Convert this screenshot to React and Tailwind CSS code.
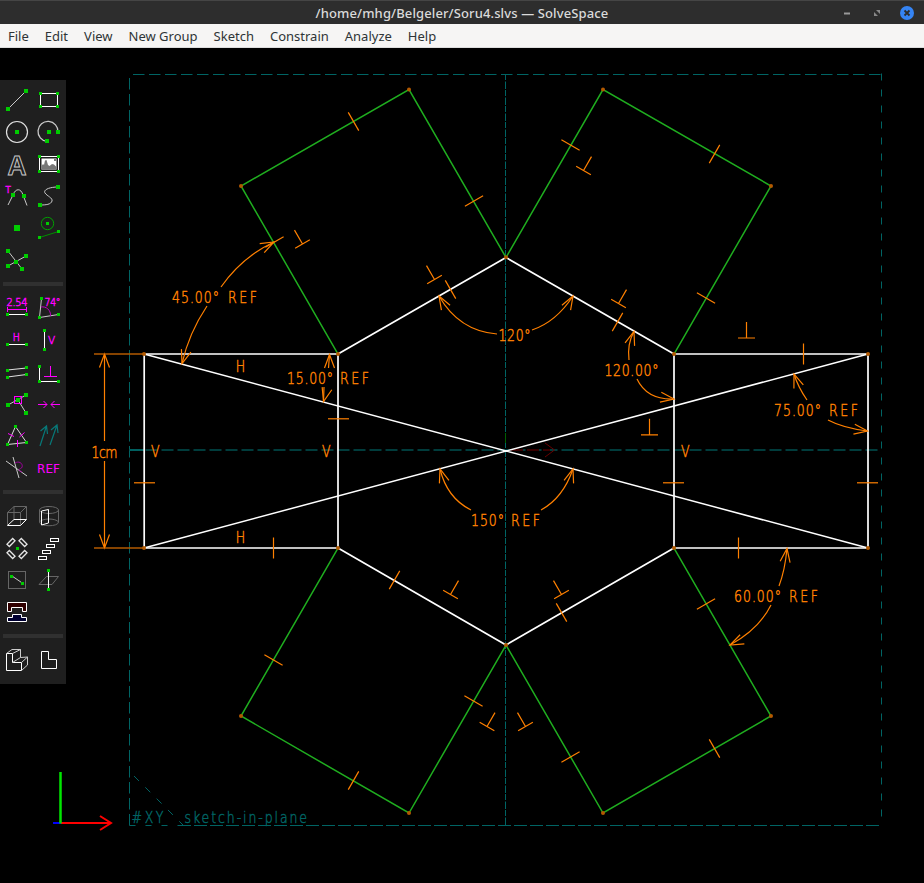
const ORANGE = "#ff8000";
const GREEN = "#1fad1f";
const TEAL = "#006464";

const menus = ["File", "Edit", "View", "New Group", "Sketch", "Constrain", "Analyze", "Help"];

function Sq({ x, y, s = 4 }) {
  return <rect x={x - s / 2} y={y - s / 2} width={s} height={s} fill="#00cc00" stroke="none" />;
}

const L = "#c9c9c9";
const M = "#ff00ff";
const D = "#666666";

function Label({ x, y, w, sx = 0.76, size = 16.5, fill = ORANGE, children }) {
  return (
    <text
      transform={`translate(${x} ${y}) scale(${sx} 1)`}
      textLength={w ? w / sx : undefined}
      lengthAdjust="spacing"
      fontFamily='"DejaVu Sans", sans-serif'
      fontWeight="200"
      fontSize={size}
      fill={fill}
      stroke={fill}
      strokeWidth="0.5"
    >
      {children}
    </text>
  );
}

/* Each icon is drawn in a 32x32 cell; origin is the cell's top left corner. */
const icons = {
  line: <><path d="M8 25L26 7" stroke={L} /><Sq x={8} y={25} /><Sq x={26} y={7} /></>,
  rect: <><rect x="8.5" y="9.5" width="17" height="13" stroke="#fff" /><Sq x={8.5} y={9.5} s={3} /><Sq x={25.5} y={9.5} s={3} /><Sq x={8.5} y={22.5} s={3} /><Sq x={25.5} y={22.5} s={3} /></>,
  circle: <><circle cx="17" cy="16" r="10.5" stroke="#e0e0e0" strokeWidth="1.2" /><Sq x={17} y={16} /></>,
  arc: <><path d="M15 25.4A10 10 0 1 1 26 16" stroke={L} strokeWidth="1.3" /><Sq x={17} y={16} /><Sq x={26} y={16} /><Sq x={15} y={25} /></>,
  text: <text x="7.5" y="26.5" textLength="19" lengthAdjust="spacingAndGlyphs" fontFamily='"Liberation Sans", sans-serif' fontWeight="700" fontSize="28" fill="none" stroke={L} strokeWidth="1">A</text>,
  image: <>
    <rect x="7.5" y="8.5" width="19" height="15" stroke="#fff" />
    <rect x="9.500" y="10.500" width="15" height="11" fill="#fff" stroke="none" />
    <path d="M9.500 21V18L11 16L12 17L13 12.500L14.500 12L16 17L17.500 18L20 16L22 16.500L24.500 19V21.500H9.500Z" fill="#777" stroke="none" />
    <rect x="22" y="11" width="2" height="2" fill="#777" stroke="none" />
    <Sq x={7.5} y={8.5} s={3} /><Sq x={26.5} y={8.5} s={3} /><Sq x={7.5} y={23.5} s={3} /><Sq x={26.5} y={23.5} s={3} />
  </>,
  tangent: <>
    <path d="M8 25L13 15C15.500 8 21 8 23 15L27 25.500" stroke={L} />
    <text x="5.500" y="13" fontFamily='"DejaVu Sans", sans-serif' fontSize="8.500" fill={M} stroke={M} strokeWidth="0.3">T</text>
    <Sq x={13} y={15} /><Sq x={24} y={16} />
  </>,
  spline: <><path d="M26 7C17 7 11 10 13 13C15 16 21 18 20 21C19 24.500 14 25 8 25" stroke={L} /><Sq x={26} y={7} /><Sq x={8} y={25} /></>,
  point: <Sq x={17} y={16} s={6} />,
  construction: <><circle cx="15.500" cy="11.500" r="6.200" stroke="#00a000" /><Sq x={15.5} y={11.5} s={3} /><path d="M7.500 25.500L26.500 19.500" stroke="#009000" /><Sq x={7.5} y={25.5} s={3} /><Sq x={26.5} y={19.5} s={3} /></>,
  split: <><path d="M8 7L22 25M8 22L26 12" stroke={L} /><Sq x={8} y={7} /><Sq x={26} y={12} /><Sq x={8} y={22} /><Sq x={22} y={25} /><Sq x={16} y={18} /></>,
  distance: <>
    <Label x={6.5} y={13.5} w={21} sx={0.9} size={11} fill={M}>2.54</Label>
    <path d="M7.500 15V20M26.500 15V20M7.500 17.500H26.500" stroke={M} />
    <path d="M7 22.500H27" stroke="#fff" /><Sq x={7.5} y={22.5} s={3} /><Sq x={26.5} y={22.5} s={3} />
  </>,
  angle: <>
    <path d="M9.500 6.500L7.500 25.500L26.500 22.500" stroke={L} />
    <path d="M9 15C14 14 19 18 18.500 24" stroke="#c000c0" />
    <Label x={12.5} y={14} w={16} sx={0.85} size={11} fill={M}>74°</Label>
    <Sq x={9.5} y={6.5} s={3} /><Sq x={7.5} y={25.5} s={3} /><Sq x={26.5} y={22.5} s={3} />
  </>,
  horizontal: <><Label x={12.8} y={17} sx={0.9} size={10.5} fill={M}>H</Label><path d="M9 20.500H25" stroke={M} /><path d="M7 20.500H27" stroke="#fff" /><Sq x={7.5} y={20.5} s={3} /><Sq x={26.5} y={20.5} s={3} /></>,
  vertical: <><path d="M12.500 7V26" stroke="#fff" /><Label x={16} y={20} sx={0.95} size={11} fill={M}>V</Label><Sq x={12.5} y={6.5} s={3} /><Sq x={12.5} y={25.5} s={3} /></>,
  parallel: <><path d="M7.500 14L26.500 12M7.500 21L26.500 18.500" stroke="#ddd" strokeWidth="1.2" /><Sq x={7.5} y={14.5} s={3} /><Sq x={26.5} y={11.5} s={3} /><Sq x={7.5} y={21.5} s={3} /><Sq x={26.5} y={18.5} s={3} /></>,
  perpendicular: <><path d="M7.500 10V25.500H27" stroke="#fff" /><path d="M18.500 10V20.500M12 20.500H25" stroke={M} /><Sq x={7.5} y={10.5} s={3} /><Sq x={7.5} y={25.5} s={3} /><Sq x={26.5} y={25.5} s={3} /></>,
  onpoint: <><path d="M8 17L26 7M18 12L26 25" stroke={L} /><rect x="14.500" y="8.500" width="7" height="7" stroke={M} /><Sq x={8} y={17} /><Sq x={26} y={7} /><Sq x={26} y={25} /><Sq x={18} y={12} /></>,
  symmetric: <path d="M6 16.500H15M11.500 13L15 16.500L11.500 20M28 16.500H19M22.500 13L19 16.500L22.500 20" stroke={M} />,
  equal: <><path d="M15.500 6.500L7.500 24.500L26.500 22.500Z" stroke="#ddd" /><path d="M8 13.500L14 16.500M19.500 17L24.500 12.500M17.500 20V27" stroke={M} /><Sq x={15.5} y={6.5} s={3} /><Sq x={7.5} y={24.5} s={3} /><Sq x={26.5} y={22.5} s={3} /></>,
  normals: <path d="M8 26L14.500 6M8.500 11L14.500 6L15.500 14M18 25L25 5M19 10L25 5L26 13" stroke="#087878" strokeWidth="1.200" />,
  other: <><path d="M6 9L27 24M13 5L19 26" stroke={L} /><path d="M15 11C20 8 24 13 21.500 16C18 18 18 18 22 20" stroke="#9d009d" /></>,
  ref: <text x="5" y="20.500" textLength="23" fontFamily='"DejaVu Sans", sans-serif' fontSize="12" fill={M} stroke="none">REF</text>,
  extrude: <><path d="M7.500 12.500L14 6.500H26.500V19L20.500 25.500M14 6.500V19.500M7.500 25V12.500H20.500V25.500M20.500 12.500L26.500 6.500" stroke={D} /><path d="M7.500 25.500H20.500L26.500 19.500H14Z" stroke="#fff" /></>,
  lathe: <><ellipse cx="17" cy="10" rx="9.500" ry="3.500" stroke={D} /><path d="M7.500 10V22C7.500 27 26.500 27 26.500 22V10M7.500 22C10 18 24 18 26.500 22" stroke={D} /><path d="M9.500 11V25L16.500 23V9.500Z" stroke="#fff" /></>,
  rotate: <>
    <g stroke="#e4e4e4" strokeWidth="1.300">
      <rect x="-4" y="-1.700" width="8" height="3.400" transform="translate(11 10.500) rotate(-45)" />
      <rect x="-4" y="-1.700" width="8" height="3.400" transform="translate(23 10.500) rotate(45)" />
      <rect x="-4" y="-1.700" width="8" height="3.400" transform="translate(11 22.500) rotate(45)" />
      <rect x="-4" y="-1.700" width="8" height="3.400" transform="translate(23 22.500) rotate(-45)" />
    </g>
    <Sq x={17.5} y={16.5} s={3} />
  </>,
  translate: <g stroke="#fff"><rect x="18.500" y="6.500" width="8" height="3" /><rect x="14.500" y="12.500" width="8" height="3" /><rect x="10.500" y="18.500" width="8" height="3" /><rect x="6.500" y="24.500" width="8" height="3" /></g>,
  inplane: <><rect x="8.500" y="7.500" width="17" height="17" stroke={D} /><path d="M12 12L23 19.500" stroke={L} /><Sq x={11.5} y={12.5} s={3} /><Sq x={22.5} y={19.5} s={3} /></>,
  in3d: <><path d="M7 20.500L14.500 12.500H26.500L20 20.500Z" stroke={D} /><path d="M16.500 7V26" stroke="#fff" /><Sq x={16.5} y={6.5} s={3} /><Sq x={16.5} y={25.5} s={3} /></>,
  assemble: <><path d="M7.500 6.500H26.500V15.500H22.500V11.500H11.500V15.500H7.500Z" fill="#300000" stroke="#fff" /><path d="M7.500 25.500V21.500H12.500V18.500H21.500V21.500H26.500V25.500Z" fill="#000032" stroke="#fff" /></>,
  solid: <g stroke="#fff"><path d="M6.500 9.500H12.500V18.500H21.500V26.500H6.500Z" /><path d="M6.500 9.500L12 5.500H20.500L12.500 9.500M20.500 5.500V13.500L12.500 18.500M20.500 13.500L27.500 13L21.500 18.500M27.500 13V21L21.500 26.500" stroke="#ccc" /></g>,
  flat: <path d="M9.500 7.500H16.500V15.500H24.500V24.500H9.500Z" stroke="#fff" />,
};

const toolbarGroups = [
  ["line", "rect", "circle", "arc", "text", "image", "tangent", "spline", "point", "construction", "split"],
  ["distance", "angle", "horizontal", "vertical", "parallel", "perpendicular", "onpoint", "symmetric", "equal", "normals", "other", "ref"],
  ["extrude", "lathe", "rotate", "translate", "inplane", "in3d", "assemble"],
  ["solid", "flat"],
];

function Toolbar() {
  return (
    <aside className="mt-8 h-[604px] w-[66px] bg-[#1f1f1f] pt-1">
      {toolbarGroups.map((group, i) => (
        <div key={i}>
          {i > 0 && <div className="mx-[3px] my-1.5 h-1 bg-[#303030]" />}
          <div className="grid w-16 grid-cols-2">
            {group.map((name) => (
              <svg key={name} className="h-8 w-8 overflow-visible" viewBox="0 0 32 32" fill="none">
                {icons[name]}
              </svg>
            ))}
          </div>
        </div>
      ))}
    </aside>
  );
}

/* Equal-length marks: centre and rotation of a 21px tick. */
const ticks = [
  [353.5, 121.5, 60], [474, 201, -30], [274.500, 242, -30], [450.500, 289.500, 60],
  [570.500, 145, 30], [714.500, 154, -60], [706, 298, 30], [617.500, 322, -60],
  [803.5, 354, 90], [867.5, 482.8, 0], [673.5, 482.800, 0], [738.5, 548, 90],
  [338.500, 418.800, 0], [144.500, 482.800, 0], [273.5, 548, 90],
  [394.500, 580, -60], [561.500, 612.500, 60], [473.500, 701, 30], [273.500, 660, 30],
  [353.500, 780.500, -60], [570.500, 757, -30], [714.500, 748.500, 60], [706, 604, -30],
];

/* Perpendicular marks: foot of the stem and rotation. */
const perps = [
  [302.500, 244, -30], [434.500, 279.500, -30], [583.500, 170.500, 30], [618.500, 303.500, 30],
  [746.500, 338, 0], [649.500, 434.800, 0], [450.500, 594.500, 30], [561.500, 594.500, -30],
  [487, 726.500, 30], [525.500, 726.500, -30],
];

const arrows = [
  [274, 242, -27], [182, 363.500, 108], [439, 296, -120], [573, 296, -60],
  [634, 331.500, -72], [674, 399, 8], [329.500, 354.500, -90], [323.500, 401.500, 105],
  [794, 374, -110], [867.500, 431, 8], [440, 469, -108], [573, 469, -72],
  [787, 548.500, -82], [730, 645, 155], [104.500, 354, -90], [104.500, 548, 90],
];

const vertices = [
  [506, 257.300], [674, 354], [674, 548], [506, 645], [338, 548], [338, 354],
  [409, 89.500], [241, 186], [603, 89.500], [771, 186], [241, 716], [409, 813],
  [603, 813], [771, 716], [144, 354], [144, 548], [868, 354], [868, 548],
];

function Sketch() {
  return (
    <svg className="h-[835px] w-[858px]" viewBox="66 48 858 835" overflow="visible" fill="none">
      <g stroke={TEAL}>
        <path d="M129.500 78V825.500" strokeDasharray="11.500 4.500" />
        <path d="M133 74.500H881" strokeDasharray="11.500 4.500" />
        <path d="M881.500 73.500V825.500" strokeDasharray="7 9" />
        <path d="M129.500 825.500H180" strokeDasharray="6 10" />
        <path d="M178 825.500H881" strokeDasharray="13 3" />
        <path d="M134 776L184 826" strokeDasharray="7 9" />
        <path d="M505.500 74V826" strokeDasharray="6 1.500 7.500 1" />
        <path d="M129.500 450H881" stroke="#003c3c" strokeWidth="2" strokeDasharray="12 4" />
        <path d="M129.500 450H145" stroke="#006060" strokeWidth="2" />
      </g>
      <Label x={131.500} y={823} w={32} fill={TEAL}>#XY</Label>
      <Label x={184.500} y={823} w={122.500} fill={TEAL}>sketch-in-plane</Label>

      <path d="M511 450H550" stroke="#380000" strokeDasharray="12 4" strokeWidth="2" />
      <path d="M545 443L554.500 450L545 457" stroke="#6a0000" />
      <path d="M505.500 433V443" stroke="#006000" />

      <g stroke={GREEN} strokeWidth="1.500">
        <path d="M506 257.500L409 89.500L241 186L338 354" />
        <path d="M506 257.500L603 89.500L771 186L674 354" />
        <path d="M338 548L241 716L409 813L506 645" />
        <path d="M674 548L771 716L603 813L506 645" />
      </g>
      <g stroke="#ffffff" strokeWidth="1.700">
        <path d="M506 257.500L674 354V548L506 645L338 548V354Z" />
        <path d="M338 354H144.200V548H338M674 354H868V548H674" />
        <path d="M144 354L868 548M144 548L868 354" strokeWidth="1.500" />
      </g>

      <g stroke={ORANGE} strokeWidth="1.200">
        {ticks.map(([x, y, r], i) => (
          <path key={i} d="M-10.500 0H10.500" transform={`translate(${x} ${y}) rotate(${r})`} />
        ))}
        {perps.map(([x, y, r], i) => (
          <path key={i} d="M-8.500 0H8.500M0 0V-16" transform={`translate(${x} ${y}) rotate(${r})`} />
        ))}
        {arrows.map(([x, y, r], i) => (
          <path key={i} d="M-13.500 -5L0 0L-13.500 5" transform={`translate(${x} ${y}) rotate(${r})`} />
        ))}
        <path d="M94 354H144M94 548H144" stroke="#b35900" strokeWidth="1.500" />
        <path d="M104.500 354V441M104.500 461V548" />
        <path d="M274 242Q242 257 221 287M207 306Q189 333 182 363.500" />
        <path d="M439 296Q459 331 497 334M532 330Q556 322 573 296" />
        <path d="M634 331.500Q627 344 629 360M637 379Q647 400 674 399" />
        <path d="M329.500 354.500L328.500 368M324 387L323.500 401.500" />
        <path d="M794 374Q798 387 807 400M828 420Q843 428 867.500 431" />
        <path d="M440 469Q447 498 471 510M541 510Q563 498 573 469" />
        <path d="M787 548.500Q785 570 779 586M771 605Q759 629 730 645" />
      </g>

      <Label x={235.800} y={371.500}>H</Label>
      <Label x={235.800} y={542.500}>H</Label>
      <Label x={151} y={457}>V</Label>
      <Label x={322} y={457}>V</Label>
      <Label x={681} y={457}>V</Label>

      <Label x={172} y={303} w={47}>45.00°</Label>
      <Label x={228} y={303} w={29}>REF</Label>
      <Label x={287} y={384} w={46}>15.00°</Label>
      <Label x={340} y={384} w={29}>REF</Label>
      <Label x={498.500} y={340.500} w={32}>120°</Label>
      <Label x={604.500} y={375.500} w={54}>120.00°</Label>
      <Label x={774} y={416} w={47}>75.00°</Label>
      <Label x={829} y={416} w={29}>REF</Label>
      <Label x={471} y={526} w={33}>150°</Label>
      <Label x={511} y={526} w={29}>REF</Label>
      <Label x={734} y={601.500} w={47}>60.00°</Label>
      <Label x={789} y={601.500} w={29}>REF</Label>
      <Label x={91.500} y={457.500} w={26}>1cm</Label>

      {vertices.map(([x, y], i) => (
        <circle key={i} cx={x} cy={y} r="2" fill="#b35900" />
      ))}

      <path d="M53 823H61" stroke="#0000ff" strokeWidth="2" />
      <path d="M61 823H111M100 816L111 823L100 830" stroke="#ff0000" strokeWidth="2" />
      <path d="M60.500 772V823.500" stroke="#00e600" strokeWidth="2.500" />
    </svg>
  );
}

function TitleBar() {
  return (
    <header className="grid h-6 grid-cols-[1fr_auto_1fr] items-center border-t border-[#454545] bg-[#2d2d2d] text-[13px] font-medium text-[#dadada]">
      <span />
      <h1 className="pt-0.5 tracking-[0.12px] whitespace-nowrap">/home/mhg/Belgeler/Soru4.slvs — SolveSpace</h1>
      <div className="flex items-center justify-end gap-4 pr-2.5">
        <svg className="h-4 w-4" viewBox="0 0 16 16"><path d="M4 8.500H10" stroke="#999" strokeWidth="2" /></svg>
        <svg className="h-4 w-3" viewBox="0 0 12 16"><path d="M4 5H8V9ZM2 7V11H6Z" fill="#888" /></svg>
        <svg className="h-3.5 w-3.5" viewBox="0 0 14 14"><circle cx="7" cy="7" r="7" fill="#3584f4" /><path d="M4.500 4.500L9.500 9.500M9.500 4.500L4.500 9.500" stroke="#2d2d2d" strokeWidth="1.800" /></svg>
      </div>
    </header>
  );
}

export default function App() {
  return (
    <div className="flex h-[883px] w-[924px] flex-col overflow-hidden bg-black font-['Noto_Sans',sans-serif]">
      <TitleBar />
      <nav className="flex h-6 items-center gap-4 border-b border-[#dddddd] bg-[#f6f5f4] px-2 pt-0.5 text-[13px] text-[#2e3436]">
        {menus.map((m) => (
          <span key={m}>{m}</span>
        ))}
      </nav>
      <main className="flex min-h-0 flex-1">
        <Toolbar />
        <Sketch />
      </main>
    </div>
  );
}
